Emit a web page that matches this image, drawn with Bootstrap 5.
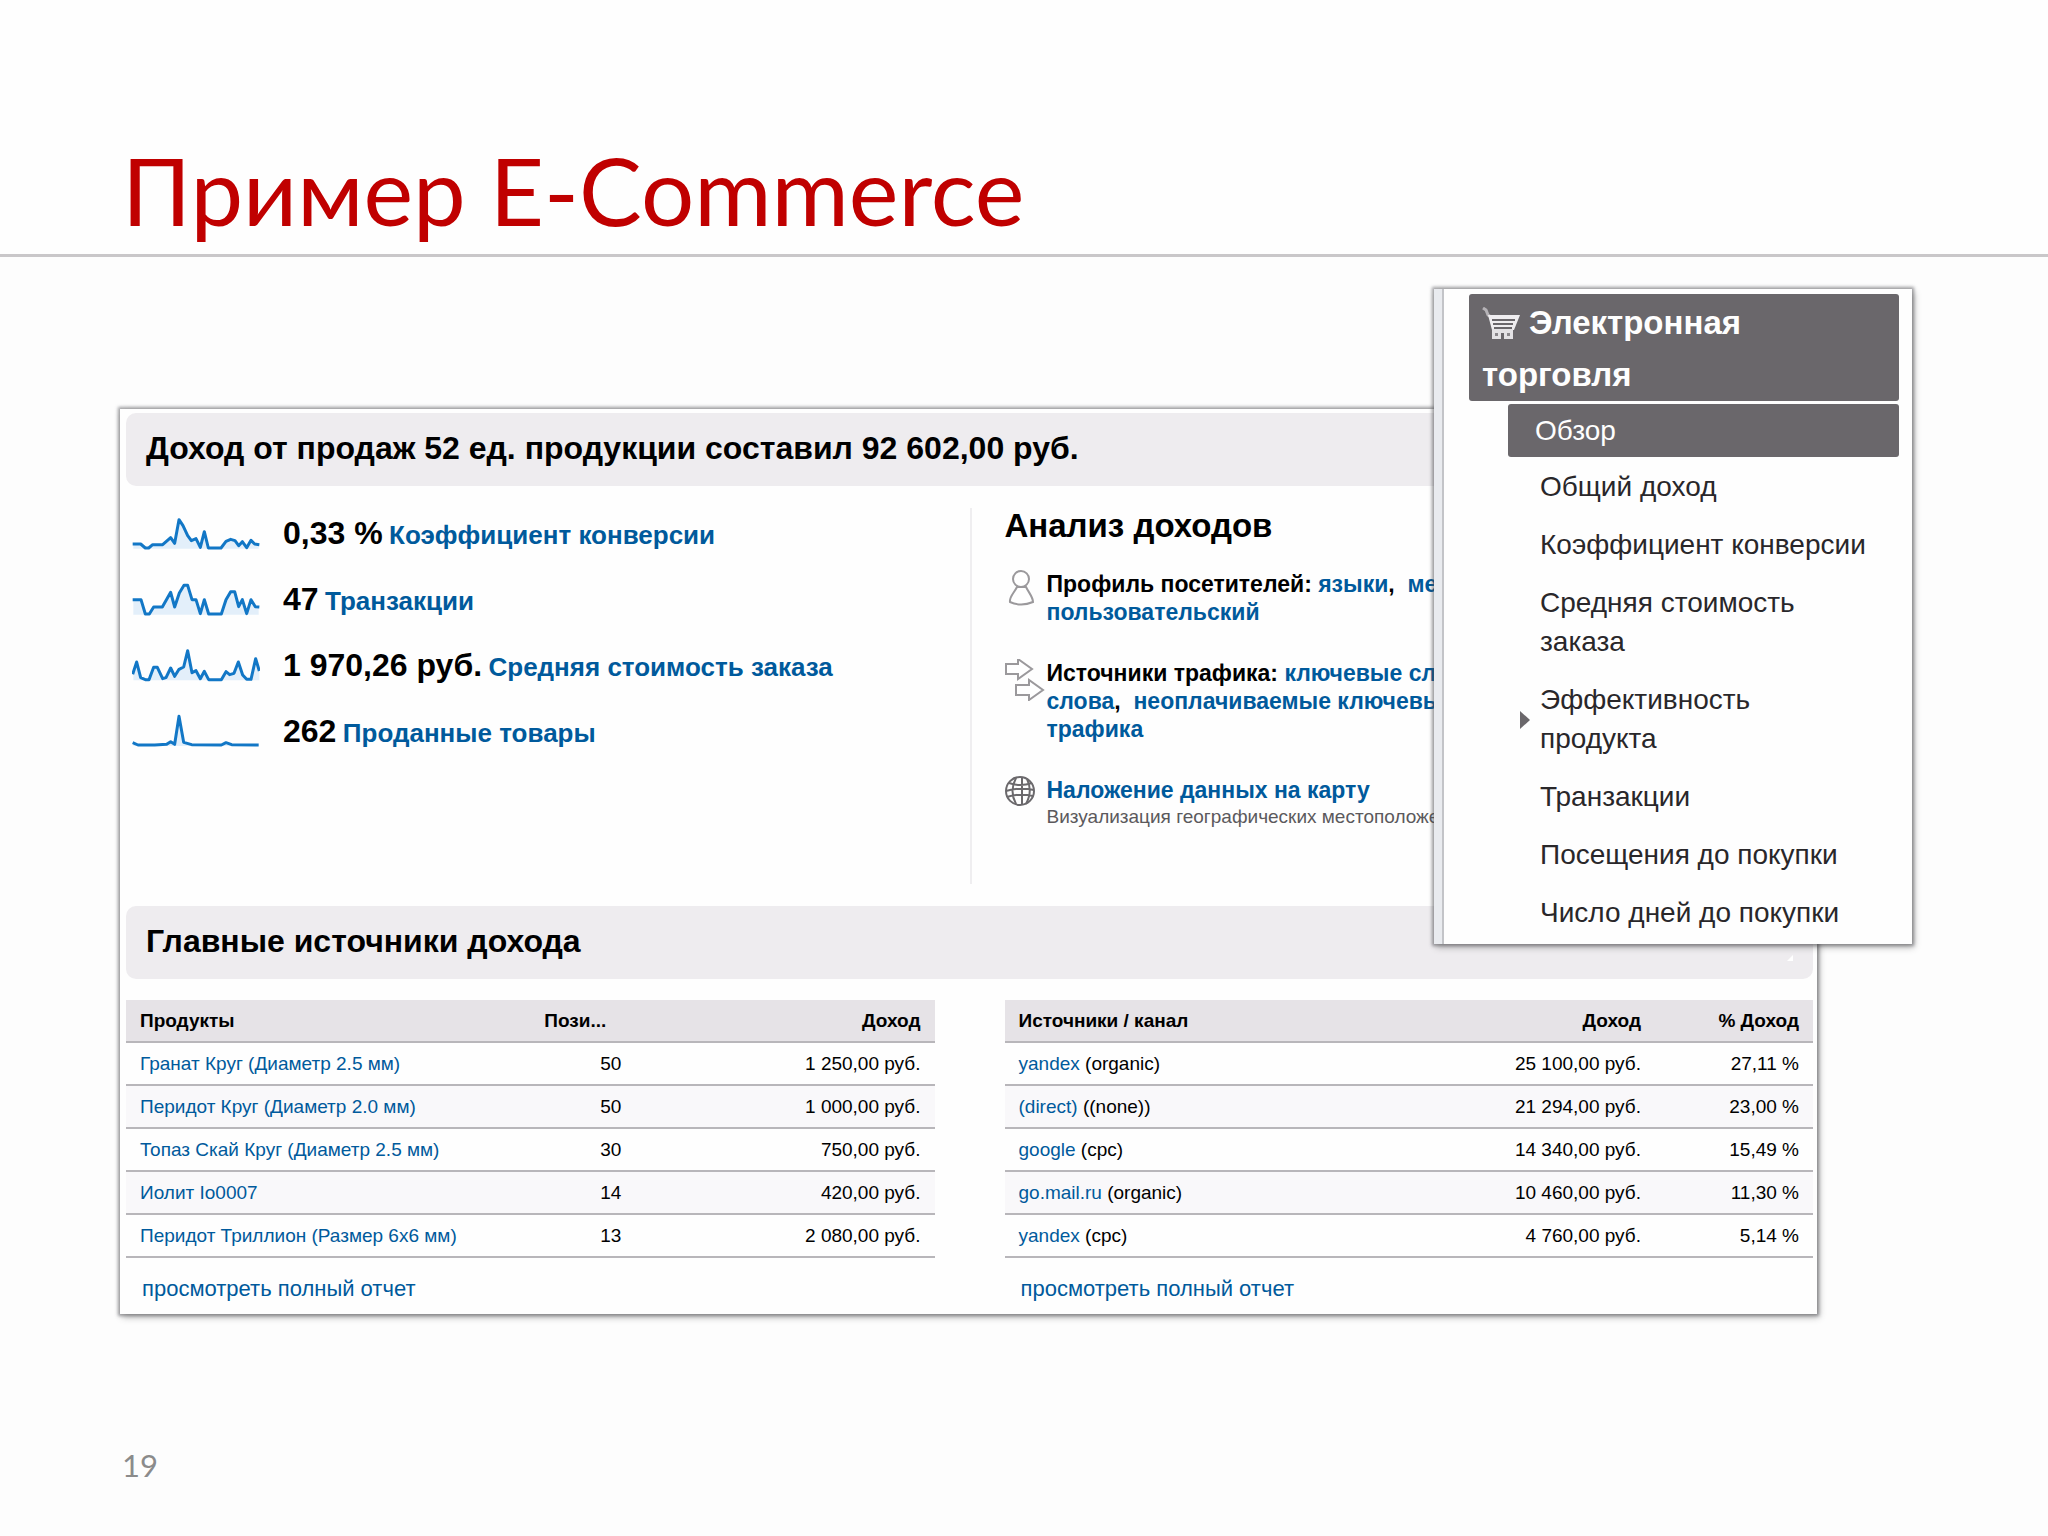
<!DOCTYPE html>
<html lang="ru">
<head>
<meta charset="utf-8">
<meta name="viewport" content="width=device-width, initial-scale=1">
<title>Пример E-Commerce</title>
<link rel="stylesheet" href="https://cdn.jsdelivr.net/npm/bootstrap@5.3.0/dist/css/bootstrap.min.css">
<style>
body{font-family:"Liberation Sans",Arial,sans-serif;background:#fdfdfd;color:#000;min-height:100vh}
a{color:#005a9c;text-decoration:none}
.slide-head{padding:131px 122px 5px;border-bottom:3px solid #c9c7c9;background:#fefefe}
.slide-title{font-family:Lato,"Open Sans",sans-serif;font-size:94px;line-height:118px;color:#c00000;font-weight:400}
.stage{padding:152px 231px 0 120px}
.report{background:#fefefe;padding:4px 4px 9px 6px;box-shadow:0 0 3px 2px rgba(80,80,85,.5),2px 3px 7px rgba(0,0,0,.3)}
.band{background:#eeecef;border-radius:10px;height:73px;padding:0 20px 2px;font-size:32px;font-weight:700}
.band svg{width:6px;height:6px}
.cols{gap:70px}
.overview{height:420px}
.stats{padding-top:14px}
.stat{height:66px;gap:23px;padding-left:6px}
.stat b{font-size:32px;margin-right:2px}
.stat a{font-size:26px;font-weight:700}
.spark{width:128px;height:35px;flex:none}
.spark polygon{fill:#e3effa}
.spark polyline{fill:none;stroke:#1277c6;stroke-width:9;stroke-linejoin:round}
.analysis{position:relative;padding-top:18px;white-space:nowrap}
.analysis::before{content:"";position:absolute;left:-35px;top:22px;height:376px;border-left:2px solid #efeef0}
.analysis h2{font-size:33px;line-height:44px;font-weight:700}
.topic{font-size:23px;line-height:28px;font-weight:700;margin-top:22px}
.topic + .topic{margin-top:33px}
.topic svg{flex:none;width:42px;height:42px}
.topic small{display:block;font-size:19px;line-height:26px;font-weight:400;color:#5b595c}
.grid-table{font-size:19px;line-height:28px;margin:21px 0 0;--bs-table-bg:transparent;color:#000;table-layout:fixed;white-space:nowrap}
.grid-table th{background:#e6e3e7;height:42px}
.grid-table th,.grid-table td{padding:0 14px;border-bottom:2px solid #b8b6ba;vertical-align:middle;color:#000}
.grid-table td{height:43px}
.grid-table tbody tr:nth-child(even){background:#f9f8fa}
.col-name{width:50%}.col-qty{width:13%}.col-share{width:158px}
.full-link{font-size:22px;line-height:30px;padding:16px 16px 1px}
.side-menu{position:absolute;top:289px;right:136px;width:478px;background:#fefefe;border-left:8px solid #e9ebef;padding:5px 13px 2px 27px;box-shadow:0 0 3px 2px rgba(80,80,85,.5),2px 3px 7px rgba(0,0,0,.3)}
.side-menu::before{content:"";position:absolute;left:0;top:0;bottom:0;border-left:2px solid #c3c4c8}
.menu-head{display:block;background:#6a676b;color:#fefefe;border-radius:3px;font-size:33px;line-height:52px;font-weight:700;padding:3px 13px 0;height:107px}
.menu-head svg{width:38px;height:32px;vertical-align:-5px;margin-right:9px}
.side-menu .item{color:#29272a;font-size:28px;line-height:39px;padding:9px 0 10px;margin:0 0 0 71px;display:block}
.side-menu .item.current{background:#6a676b;color:#fefefe;border-radius:3px;margin:3px 0 1px 39px;padding:7px 27px}
.side-menu .parent{position:relative}
.parent::before{content:"";position:absolute;left:-20px;top:40px;border:9px solid transparent;border-left:10px solid #6a676b;border-right:0}
.page-no{font-family:Lato,"Open Sans",sans-serif;font-size:31px;line-height:40px;color:#8b8b8b;padding:131px 122px 0}
</style>
<script src="https://cdn.jsdelivr.net/npm/bootstrap@5.3.0/dist/js/bootstrap.bundle.min.js"></script>
</head>
<body class="position-relative">
<header class="slide-head"><h1 class="slide-title m-0">Пример E-Commerce</h1></header>
<main class="stage">
 <section class="report">
  <h2 class="band d-flex align-items-center m-0">Доход от продаж 52 ед. продукции составил 92 602,00 руб.</h2>
  <div class="overview d-flex cols">
   <div class="stats col">
    <div class="stat d-flex align-items-center"><svg class="spark" viewBox="36 45 384 105"><polygon points="40,143 40,129 62,129 76,141 86,141 98,131 128,131 152,110 164,127 177,56 189,74 203,104 214,119 228,113 241,139 253,92 265,141 303,141 318,121 332,115 345,119 356,134 367,122 380,140 393,118 404,129 416,131 416,143"/><polyline points="38,129 62,129 76,141 86,141 98,131 128,131 152,110 164,127 177,56 189,74 203,104 214,119 228,113 241,139 253,92 265,141 303,141 318,121 332,115 345,119 356,134 367,122 380,140 393,118 404,129 418,131"/></svg><div><b>0,33 %</b> <a href="#">Коэффициент конверсии</a></div></div>
    <div class="stat d-flex align-items-center"><svg class="spark" viewBox="36 245 384 105"><polygon points="40,343 40,298 63,298 76,341 88,341 101,320 127,320 152,276 164,320 178,278 192,255 203,255 216,298 228,298 241,340 253,298 266,341 304,341 318,298 332,274 344,274 356,319 367,298 380,340 393,298 406,319 416,320 416,343"/><polyline points="38,298 63,298 76,341 88,341 101,320 127,320 152,276 164,320 178,278 192,255 203,255 216,298 228,298 241,340 253,298 266,341 304,341 318,298 332,274 344,274 356,319 367,298 380,340 393,298 406,319 418,320"/></svg><div><b>47</b> <a href="#">Транзакции</a></div></div>
    <div class="stat d-flex align-items-center"><svg class="spark" viewBox="36 445 384 105"><polygon points="40,542 40,522 50,487 62,534 76,540 87,540 101,503 112,503 128,537 138,534 152,505 164,530 177,509 191,502 203,453 216,519 228,513 241,537 253,515 266,540 304,540 318,516 329,525 342,521 355,487 368,526 380,539 393,539 407,477 418,514 418,542"/><polyline points="38,524 50,487 62,534 76,540 87,540 101,503 112,503 128,537 138,534 152,505 164,530 177,509 191,502 203,453 216,519 228,513 241,537 253,515 266,540 304,540 318,516 329,525 342,521 355,487 368,526 380,539 393,539 407,477 418,514"/></svg><div><b>1 970,26 руб.</b> <a href="#">Средняя стоимость заказа</a></div></div>
    <div class="stat d-flex align-items-center"><svg class="spark" viewBox="36 645 384 105"><polygon points="40,741 40,733 60,738 140,736 152,727 164,736 177,652 191,730 215,736 304,738 318,730 335,736 416,738 416,741"/><polyline points="38,731 54,738 104,738 140,736 152,728 164,736 177,652 191,730 215,737 304,738 318,731 335,737 416,738"/></svg><div><b>262</b> <a href="#">Проданные товары</a></div></div>
   </div>
   <div class="analysis col">
    <h2 class="m-0">Анализ доходов</h2>
    <div class="topic d-flex"><svg viewBox="0 0 42 42" fill="#fff" stroke="#9b999c" stroke-width="2"><path d="M12 17C9 23 4 27 5 32Q16 37 28 32C28 27 24 23 21 17Z"/><circle cx="16" cy="9" r="8"/></svg><div>Профиль посетителей: <a href="#">языки</a>,&nbsp; <a href="#">места</a><br><a href="#">пользовательский</a></div></div>
    <div class="topic d-flex"><svg viewBox="0 0 42 42" fill="#fff" stroke="#9b999c" stroke-width="2"><path d="M1 5H13V0L27 10 13 20V15H1ZM11 26H24V21L38 31 24 41V36H11Z"/></svg><div>Источники трафика: <a href="#">ключевые слова</a><br><a href="#">слова</a>,&nbsp; <a href="#">неоплачиваемые ключевые</a><br><a href="#">трафика</a></div></div>
    <div class="topic d-flex"><svg viewBox="0 0 42 42" fill="none" stroke="#6b696c" stroke-width="2"><circle cx="15" cy="15" r="14"/><path d="M11 2Q4 15 11 28M17 1V29M22 3Q28 15 21 28M4 7Q15 11 27 7M1 15Q15 11 29 14M2 21Q15 17 28 20"/></svg><div><a href="#">Наложение данных на карту</a><small>Визуализация географических местоположений</small></div></div>
   </div>
  </div>
  <h2 class="band d-flex align-items-center justify-content-between m-0">Главные источники дохода<svg class="align-self-end mb-3" viewBox="0 0 6 6"><path d="M0 6L6 0V6Z" fill="#fff"/></svg></h2>
  <div class="d-flex cols">
   <div class="col">
    <table class="table grid-table">
     <thead><tr><th class="col-name">Продукты</th><th class="col-qty">Пози...</th><th class="text-end">Доход</th></tr></thead>
     <tbody class="text-end">
      <tr><td class="text-start"><a href="#">Гранат Круг (Диаметр 2.5 мм)</a></td><td>50</td><td>1 250,00 руб.</td></tr>
      <tr><td class="text-start"><a href="#">Перидот Круг (Диаметр 2.0 мм)</a></td><td>50</td><td>1 000,00 руб.</td></tr>
      <tr><td class="text-start"><a href="#">Топаз Скай Круг (Диаметр 2.5 мм)</a></td><td>30</td><td>750,00 руб.</td></tr>
      <tr><td class="text-start"><a href="#">Иолит Io0007</a></td><td>14</td><td>420,00 руб.</td></tr>
      <tr><td class="text-start"><a href="#">Перидот Триллион (Размер 6x6 мм)</a></td><td>13</td><td>2 080,00 руб.</td></tr>
     </tbody>
    </table>
    <div class="full-link"><a href="#">просмотреть полный отчет</a></div>
   </div>
   <div class="col">
    <table class="table grid-table">
     <thead><tr><th class="col-name">Источники / канал</th><th class="text-end">Доход</th><th class="col-share text-end">% Доход</th></tr></thead>
     <tbody class="text-end">
      <tr><td class="text-start"><a href="#">yandex</a> (organic)</td><td>25 100,00 руб.</td><td>27,11 %</td></tr>
      <tr><td class="text-start"><a href="#">(direct)</a> ((none))</td><td>21 294,00 руб.</td><td>23,00 %</td></tr>
      <tr><td class="text-start"><a href="#">google</a> (cpc)</td><td>14 340,00 руб.</td><td>15,49 %</td></tr>
      <tr><td class="text-start"><a href="#">go.mail.ru</a> (organic)</td><td>10 460,00 руб.</td><td>11,30 %</td></tr>
      <tr><td class="text-start"><a href="#">yandex</a> (cpc)</td><td>4 760,00 руб.</td><td>5,14 %</td></tr>
     </tbody>
    </table>
    <div class="full-link"><a href="#">просмотреть полный отчет</a></div>
   </div>
  </div>
 </section>
</main>
<nav class="side-menu">
 <a class="menu-head" href="#"><svg viewBox="0 0 38 32"><path d="M1 1L4 3 6 8 9 10" fill="none" stroke="#b5b2b6" stroke-width="3"/><path d="M6 8H38L32 23H10Z" fill="#efedf0"/><path d="M10 13H33M11 17H31M12 21H30" stroke="#6a676b" stroke-width="2"/><path d="M10 22H31V32H22V26H19V32H10Z" fill="#e4e2e5"/><path d="M13 26h3v3h-3zM25 26h3v3h-3z" fill="#8b888c"/></svg>Электронная<br>торговля</a>
 <a class="item current" href="#">Обзор</a>
 <a class="item" href="#">Общий доход</a>
 <a class="item" href="#">Коэффициент конверсии</a>
 <a class="item" href="#">Средняя стоимость<br>заказа</a>
 <a class="item parent" href="#">Эффективность<br>продукта</a>
 <a class="item" href="#">Транзакции</a>
 <a class="item" href="#">Посещения до покупки</a>
 <a class="item" href="#">Число дней до покупки</a>
</nav>
<footer class="page-no">19</footer>
</body>
</html>
